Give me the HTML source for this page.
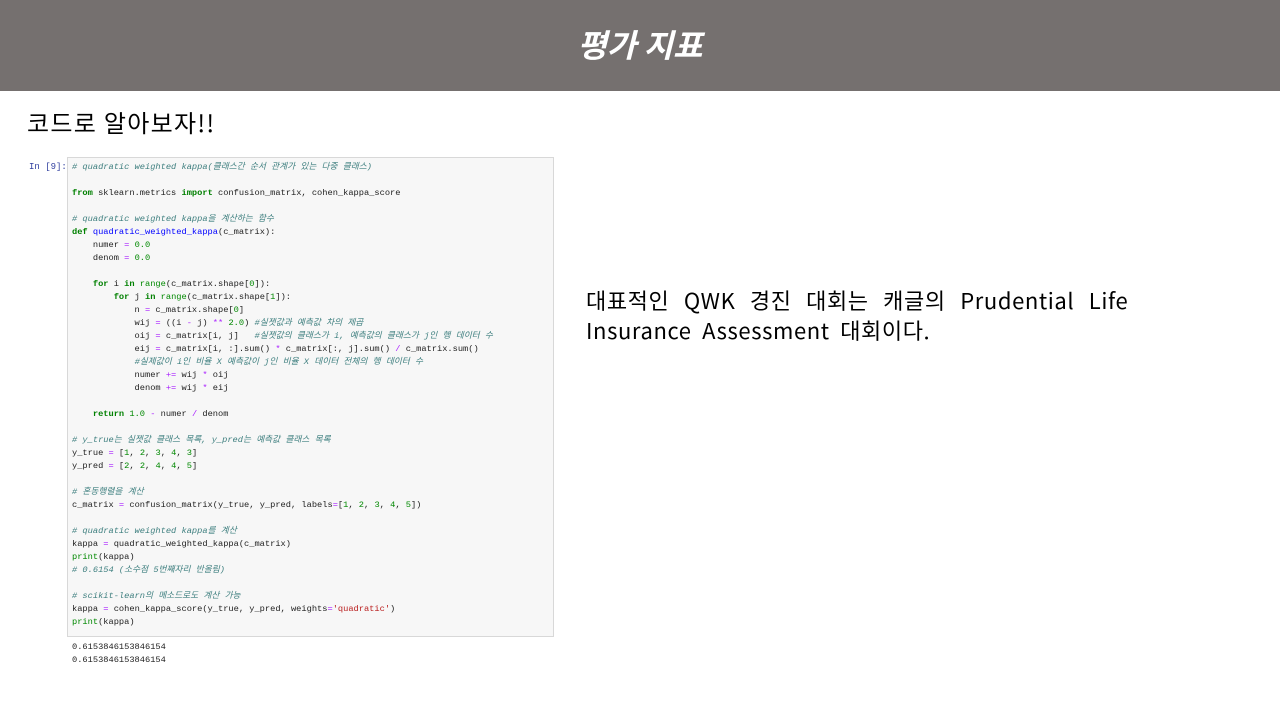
<!DOCTYPE html>
<html><head><meta charset="utf-8"><style>
body{margin:0;width:1280px;height:720px;background:#fff;position:relative;overflow:hidden;font-family:"Liberation Sans","Noto Sans CJK KR",sans-serif}
.hdr{position:absolute;left:0;top:0;width:1280px;height:91px;background:#75706f;color:#fff;text-align:center;font-size:32px;font-weight:bold;font-style:italic;line-height:88px;font-family:"Noto Sans CJK KR",sans-serif}
.sub{position:absolute;left:27px;top:104px;font-size:24px;letter-spacing:1.3px;color:#000;font-family:"Noto Sans CJK KR",sans-serif;line-height:36px}
.in{position:absolute;left:29px;top:161px;font:9px/13px "Liberation Mono",monospace;color:#303f9f}
.box{position:absolute;left:67px;top:157px;width:485px;height:478px;background:#f7f7f7;border:1px solid #d8d8d8}
pre{margin:0;position:absolute;left:72px;top:161px;font:8.7px/13px "Liberation Mono","Noto Sans CJK KR",monospace;color:#222;white-space:pre}
.c{color:#408080;font-style:italic}.k{color:#008000;font-weight:bold}.n{color:#080}.o{color:#a2f}.f{color:#00f}.b{color:#080}.s{color:#ba2121}
.out{position:absolute;left:72px;top:641px;font:8.7px/13px "Liberation Mono",monospace;color:#222;white-space:pre}
.txt{position:absolute;left:586px;top:285px;font-size:22px;line-height:30px;color:#000;width:600px;letter-spacing:0.6px;word-spacing:5px;font-family:"Noto Sans CJK KR",sans-serif;white-space:nowrap}
</style></head><body>
<div class="hdr">평가 지표</div>
<div class="sub">코드로 알아보자!!</div>
<div class="in">In [9]:</div>
<div class="box"></div>
<pre><span class="c"># quadratic weighted kappa(클래스간 순서 관계가 있는 다중 클래스)</span>

<span class="k">from</span> sklearn.metrics <span class="k">import</span> confusion_matrix, cohen_kappa_score

<span class="c"># quadratic weighted kappa을 계산하는 함수</span>
<span class="k">def</span> <span class="f">quadratic_weighted_kappa</span>(c_matrix):
    numer <span class="o">=</span> <span class="n">0.0</span>
    denom <span class="o">=</span> <span class="n">0.0</span>

    <span class="k">for</span> i <span class="k">in</span> <span class="b">range</span>(c_matrix.shape[<span class="n">0</span>]):
        <span class="k">for</span> j <span class="k">in</span> <span class="b">range</span>(c_matrix.shape[<span class="n">1</span>]):
            n <span class="o">=</span> c_matrix.shape[<span class="n">0</span>]
            wij <span class="o">=</span> ((i <span class="o">-</span> j) <span class="o">**</span> <span class="n">2.0</span>) <span class="c">#실젯값과 예측값 차의 제곱</span>
            oij <span class="o">=</span> c_matrix[i, j]   <span class="c">#실젯값의 클래스가 i, 예측값의 클래스가 j인 행 데이터 수</span>
            eij <span class="o">=</span> c_matrix[i, :].sum() <span class="o">*</span> c_matrix[:, j].sum() <span class="o">/</span> c_matrix.sum()
            <span class="c">#실제값이 i인 비율 X 예측값이 j인 비율 X 데이터 전체의 행 데이터 수</span>
            numer <span class="o">+=</span> wij <span class="o">*</span> oij
            denom <span class="o">+=</span> wij <span class="o">*</span> eij

    <span class="k">return</span> <span class="n">1.0</span> <span class="o">-</span> numer <span class="o">/</span> denom

<span class="c"># y_true는 실젯값 클래스 목록, y_pred는 예측값 클래스 목록</span>
y_true <span class="o">=</span> [<span class="n">1</span>, <span class="n">2</span>, <span class="n">3</span>, <span class="n">4</span>, <span class="n">3</span>]
y_pred <span class="o">=</span> [<span class="n">2</span>, <span class="n">2</span>, <span class="n">4</span>, <span class="n">4</span>, <span class="n">5</span>]

<span class="c"># 혼동행렬을 계산</span>
c_matrix <span class="o">=</span> confusion_matrix(y_true, y_pred, labels<span class="o">=</span>[<span class="n">1</span>, <span class="n">2</span>, <span class="n">3</span>, <span class="n">4</span>, <span class="n">5</span>])

<span class="c"># quadratic weighted kappa를 계산</span>
kappa <span class="o">=</span> quadratic_weighted_kappa(c_matrix)
<span class="b">print</span>(kappa)
<span class="c"># 0.6154 (소수점 5번째자리 반올림)</span>

<span class="c"># scikit-learn의 메소드로도 계산 가능</span>
kappa <span class="o">=</span> cohen_kappa_score(y_true, y_pred, weights<span class="o">=</span><span class="s">'quadratic'</span>)
<span class="b">print</span>(kappa)</pre>
<div class="out">0.6153846153846154
0.6153846153846154</div>
<div class="txt"><span style="word-spacing:9px">대표적인 QWK 경진 대회는 캐글의 Prudential Life</span><br>Insurance Assessment 대회이다.</div>
</body></html>
